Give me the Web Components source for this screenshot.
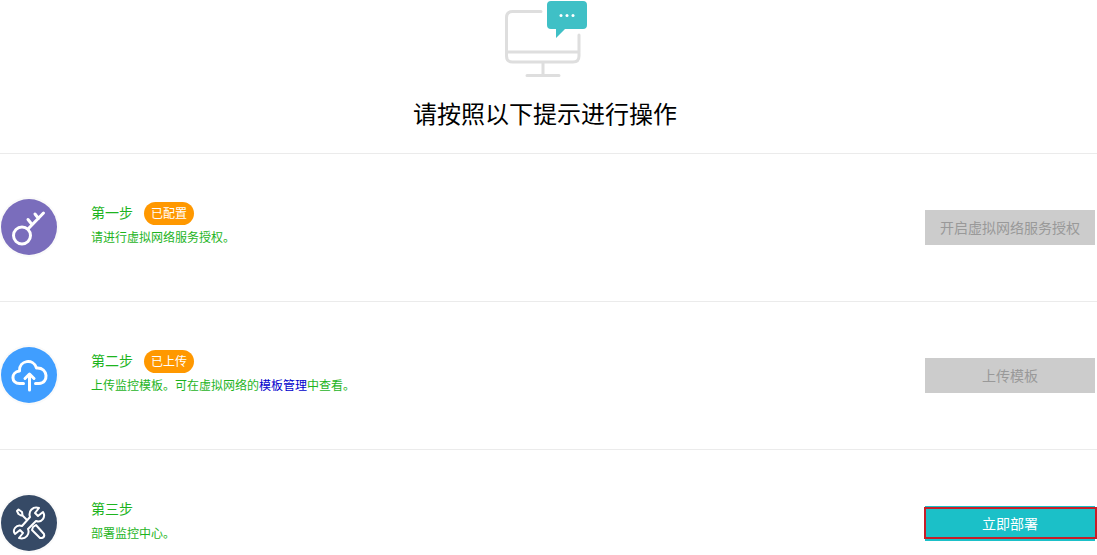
<!DOCTYPE html>
<html lang="zh-CN">
<head>
<meta charset="utf-8">
<meta name="viewport" content="width=device-width, initial-scale=1">
<title>部署向导</title>
<style>
body { margin: 0; background: #fff; color: #000; font-family: "Liberation Sans", "Noto Sans CJK SC", sans-serif; }
</style>
</head>
<body>
<setup-guide></setup-guide>

<template id="guide-tpl">
  <style>
    :host { display: block; }
    a { color: #00c; text-decoration: none; }
  </style>
  <guide-header>请按照以下提示进行操作</guide-header>
  <main>
    <guide-step>
      <step-icon slot="icon" name="key"></step-icon>
      <span slot="title">第一步</span>
      <status-badge slot="badge">已配置</status-badge>
      <span slot="desc">请进行虚拟网络服务授权。</span>
      <action-button slot="action" disabled>开启虚拟网络服务授权</action-button>
    </guide-step>
    <guide-step>
      <step-icon slot="icon" name="cloud"></step-icon>
      <span slot="title">第二步</span>
      <status-badge slot="badge">已上传</status-badge>
      <span slot="desc">上传监控模板。可在虚拟网络的<a href="#templates">模板管理</a>中查看。</span>
      <action-button slot="action" disabled>上传模板</action-button>
    </guide-step>
    <guide-step last>
      <step-icon slot="icon" name="tools"></step-icon>
      <span slot="title">第三步</span>
      <span slot="desc">部署监控中心。</span>
      <action-button slot="action" marked>立即部署</action-button>
    </guide-step>
  </main>
</template>

<template id="header-tpl">
  <style>
    :host { display: block; }
    header { display: flex; flex-direction: column; align-items: center; padding: 0 7px 20px 0; }
    svg { display: block; width: 84px; height: 78px; }
    h1 { margin: 19px 0 0; font-size: 24px; line-height: 36px; font-weight: 400; }
  </style>
  <header>
    <svg viewBox="0 0 84 78" fill="none" aria-hidden="true">
      <path d="M38 11.500H9.500Q3.500 11.500 3.500 17.500V56Q3.500 62 9.500 62H70Q76 62 76 56V35M3.500 52H76M40 62V75M24 75.500H56" stroke="#dedede" stroke-width="3" stroke-linecap="round"/>
      <path d="M48 1H80Q84 1 84 5V25Q84 29 80 29H62L53 38V29H48Q44 29 44 25V5Q44 1 48 1Z" fill="#3fc0c6"/>
      <g fill="#fff"><circle cx="58" cy="15.500" r="1.500"/><circle cx="64" cy="15.500" r="1.500"/><circle cx="70" cy="15.500" r="1.500"/></g>
    </svg>
    <h1><slot></slot></h1>
  </header>
</template>

<template id="step-tpl">
  <style>
    :host { display: block; border-top: 1px solid #ebebeb; }
    section { display: flex; align-items: center; padding: 43px 2px 44px 0; }
    :host([last]) section { padding-bottom: 0; }
    .text { flex: 1; margin-left: 31px; color: #1eb41e; }
    h2 { display: flex; align-items: center; gap: 11px; margin: 0; font-size: 14px; line-height: 24px; font-weight: 400; }
    p { margin: 1px 0 0; padding-bottom: 3px; font-size: 12px; line-height: 24px; }
  </style>
  <section>
    <slot name="icon"></slot>
    <div class="text">
      <h2><slot name="title"></slot><slot name="badge"></slot></h2>
      <p><slot name="desc"></slot></p>
    </div>
    <slot name="action"></slot>
  </section>
</template>

<template id="badge-tpl">
  <style>
    :host { display: block; padding: 1px 7px 0; border-radius: 12px; background: #ff9800; color: #fff; font-size: 12px; line-height: 22px; }
  </style>
  <slot></slot>
</template>

<template id="button-tpl">
  <style>
    :host { display: block; position: relative; }
    button { display: block; width: 170px; height: 35px; padding: 1px 0 0; border: 0; background: #1bc0c8; color: #fff; font: inherit; font-size: 14px; line-height: 34px; cursor: pointer; }
    button:disabled { background: #ccc; color: #999; cursor: default; }
    :host([marked])::after { content: ""; position: absolute; inset: 1px -2px 2px -1px; border: 2px solid #c81e28; pointer-events: none; }
  </style>
  <button type="button"><slot></slot></button>
</template>

<template id="icon-tpl">
  <style>
    :host { display: block; }
    svg { display: none; width: 60px; height: 60px; }
    :host([name="key"]) .key, :host([name="cloud"]) .cloud, :host([name="tools"]) .tools { display: block; }
    .ring { fill: #fafafa; stroke: none; }
  </style>
  <svg class="key" viewBox="0 0 60 60" fill="none" stroke="#fff" stroke-width="3" stroke-linecap="round" aria-hidden="true">
    <circle class="ring" cx="29" cy="30" r="30"/><circle cx="29" cy="30" r="28" fill="#7a6dbc" stroke="none"/>
    <circle cx="22" cy="38.500" r="8.500"/><path d="M28 32L43.500 16M32 27.500L28 22.500M38.500 21.500L35 17"/>
  </svg>
  <svg class="cloud" viewBox="0 0 60 60" fill="none" stroke="#fff" stroke-width="3" stroke-linecap="round" stroke-linejoin="round" aria-hidden="true">
    <circle class="ring" cx="29" cy="30" r="30"/><circle cx="29" cy="30" r="28" fill="#409eff" stroke="none"/>
    <path d="M23.500 38.500H19.500C11 38.500 10.500 27 19.500 26C19 15 33.500 13 36.500 23C48.500 22 49 38.500 39 38.500H35.500M29.500 45V29.500M25 33.500L29.500 29L34 33.500"/>
  </svg>
  <svg class="tools" viewBox="0 0 60 60" fill="none" stroke="#fff" stroke-width="2" stroke-linecap="round" stroke-linejoin="round" aria-hidden="true">
    <circle class="ring" cx="29" cy="30" r="30"/><circle cx="29" cy="30" r="28" fill="#364a66" stroke="none"/>
    <path d="M17 18L18.500 16.500L22 19L22.500 22L21 22.500L18.500 21ZM22 22L30 30M33 34L36 32L44 41Q45 44 42 45L40 45L32 37Z"/>
    <path d="M43 19L38 23L35 20L39 15C33 13 28 18 30 24L22 33C16 31 12 37 15 41L20 37L23 40L19 45C26 47 30 41 28 36L36 28C42 30 46 24 43 19Z" fill="#364a66"/>
  </svg>
</template>

<script>
const define = (name, id) => customElements.define(name, class extends HTMLElement {
  constructor() {
    super();
    this.attachShadow({ mode: 'open' }).append(document.getElementById(id).content.cloneNode(true));
  }
});

define('guide-header', 'header-tpl');
define('guide-step', 'step-tpl');
define('status-badge', 'badge-tpl');
define('step-icon', 'icon-tpl');

customElements.define('action-button', class extends HTMLElement {
  static observedAttributes = ['disabled'];
  constructor() {
    super();
    this.attachShadow({ mode: 'open' }).append(document.getElementById('button-tpl').content.cloneNode(true));
  }
  attributeChangedCallback() {
    this.shadowRoot.querySelector('button').disabled = this.hasAttribute('disabled');
  }
});

define('setup-guide', 'guide-tpl');
</script>
</body>
</html>
